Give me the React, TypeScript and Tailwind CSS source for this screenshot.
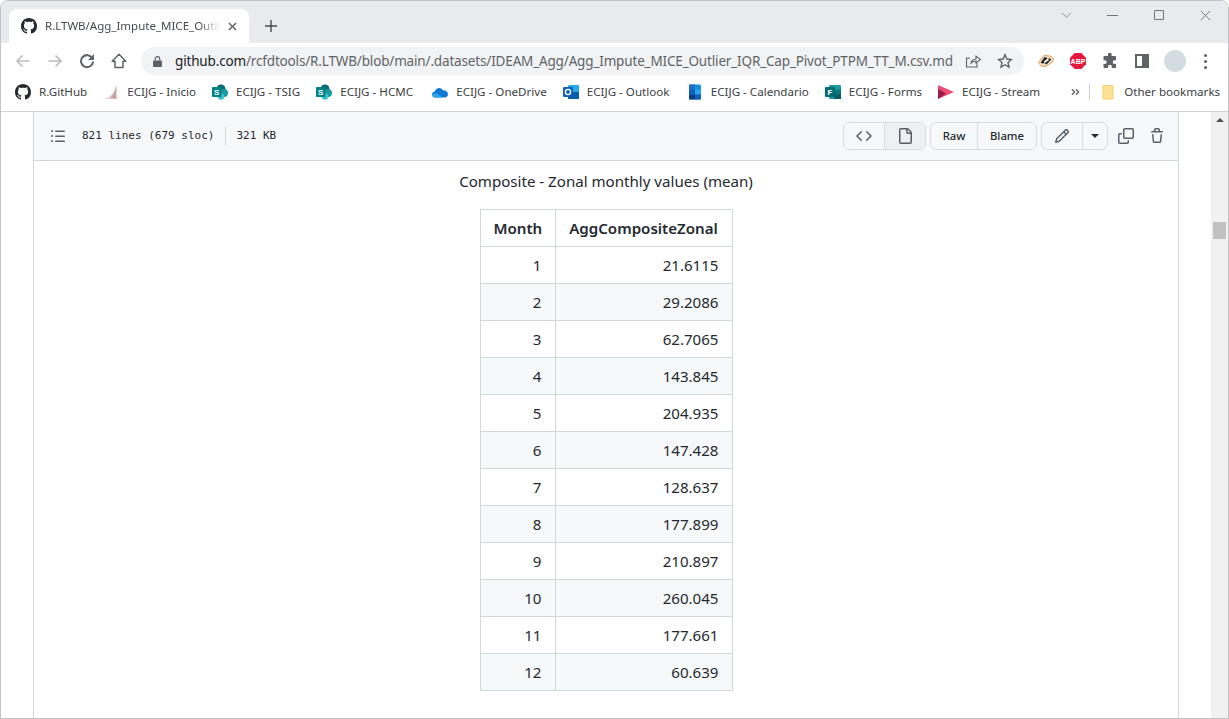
import React from 'react';

const GH_MARK =
  'M8 0c4.42 0 8 3.58 8 8a8.013 8.013 0 0 1-5.45 7.59c-.4.08-.55-.17-.55-.38 0-.27.01-1.13.01-2.2 0-.75-.25-1.23-.54-1.48 1.78-.2 3.65-.88 3.65-3.95 0-.88-.31-1.59-.82-2.15.08-.2.36-1.02-.08-2.12 0 0-.67-.22-2.2.82-.64-.18-1.32-.27-2-.27-.68 0-1.36.09-2 .27-1.53-1.03-2.2-.82-2.2-.82-.44 1.1-.16 1.92-.08 2.12-.51.56-.82 1.28-.82 2.15 0 3.06 1.86 3.75 3.64 3.95-.23.2-.44.55-.51 1.07-.46.21-1.61.55-2.33-.66-.15-.24-.6-.83-1.23-.82-.67.01-.27.38.01.53.34.19.73.9.82 1.13.16.45.68 1.31 2.69.94 0 .67.01 1.3.01 1.49 0 .21-.15.45-.55.38A7.995 7.995 0 0 1 0 8c0-4.42 3.58-8 8-8Z';

const GithubMark = () => (
  <svg viewBox="0 0 16 16" className="w-4 h-4 shrink-0" fill="#24292f">
    <path d={GH_MARK} />
  </svg>
);

const SharePointIcon = () => (
  <svg viewBox="0 0 16 16" className="w-4 h-4 shrink-0">
    <circle cx="9" cy="5" r="4.5" fill="#036c70" />
    <circle cx="12" cy="9" r="4" fill="#1a9ba1" />
    <circle cx="9" cy="12.5" r="3.2" fill="#37c6d0" />
    <rect x="0" y="3" width="9.5" height="10" rx="1" fill="#038387" />
    <text x="4.7" y="11" fontSize="8" fontWeight="700" fill="#fff" textAnchor="middle" fontFamily="Liberation Sans">S</text>
  </svg>
);

const InicioIcon = () => (
  <svg viewBox="0 0 16 16" className="w-4 h-4 shrink-0">
    <path d="M13 1C12.5 7 9 12 1 15H13.5C13 10 14 5 13 1Z" fill="#e7d6d6" />
    <path d="M13 1C12.5 6 11 10 7 14L13.5 15C13 10 14 5 13 1Z" fill="#c9a5a5" />
  </svg>
);

const OneDriveIcon = () => (
  <svg viewBox="0 0 16 16" className="w-4 h-4 shrink-0">
    <path d="M3.5 13.5C1.5 13.5 0 12 0 10.4 0 8.8 1.2 7.6 2.8 7.4 3.6 5.4 5.3 4 7.2 4c1.7 0 3.1.9 3.9 2.4 2.6-.3 4.9 1.6 4.9 3.9 0 1.8-1.4 3.2-3.2 3.2Z" fill="#0f78d4" />
    <path d="M3.5 13.5C1.5 13.5 0 12 0 10.4 2 9 4 8.6 6.2 10l4 3.5Z" fill="#28a8ea" />
  </svg>
);

const OutlookIcon = () => (
  <svg viewBox="0 0 16 16" className="w-4 h-4 shrink-0">
    <rect x="5" y="1" width="11" height="14" rx="1" fill="#28a8ea" />
    <rect x="5" y="8" width="11" height="7" fill="#0a5ea8" />
    <rect x="0" y="3" width="10" height="10" rx="1" fill="#0f5fb5" />
    <circle cx="5" cy="8" r="2.6" fill="none" stroke="#fff" strokeWidth="1.4" />
  </svg>
);

const CalendarIcon = () => (
  <svg viewBox="0 0 16 16" className="w-4 h-4 shrink-0">
    <rect x="2" y="0.5" width="12" height="15" rx="1.5" fill="#1490df" />
    <rect x="2" y="0.5" width="6" height="5" fill="#1f6fc6" />
    <rect x="8" y="5.5" width="6" height="5" fill="#28a8ea" />
    <rect x="2" y="5.5" width="6" height="5" fill="#0f5fb5" />
    <rect x="2" y="10.5" width="6" height="5" fill="#0a3f86" />
    <rect x="8" y="10.5" width="6" height="5" fill="#0f5fb5" />
  </svg>
);

const FormsIcon = () => (
  <svg viewBox="0 0 16 16" className="w-4 h-4 shrink-0">
    <rect x="4" y="1" width="12" height="14" rx="1" fill="#1a9ba1" />
    <rect x="9" y="5.5" width="7" height="4.5" fill="#037c80" />
    <rect x="9" y="10" width="7" height="5" fill="#045c60" />
    <rect x="0" y="3" width="10" height="10" rx="1" fill="#036c70" />
    <text x="5" y="11" fontSize="8" fontWeight="700" fill="#fff" textAnchor="middle" fontFamily="Liberation Sans">F</text>
  </svg>
);

const StreamIcon = () => (
  <svg viewBox="0 0 16 16" className="w-4 h-4 shrink-0">
    <path d="M0 1L16 8 0 15Z" fill="#ea4c76" />
    <path d="M0 5L8 9.5 0 15Z" fill="#9b1b48" />
  </svg>
);

const bookmarks: { icon: React.ReactNode; label: string; width?: string }[] = [
  { icon: <GithubMark />, label: 'R.GitHub' },
  { icon: <InicioIcon />, label: 'ECIJG - Inicio' },
  { icon: <SharePointIcon />, label: 'ECIJG - TSIG' },
  { icon: <SharePointIcon />, label: 'ECIJG - HCMC', width: 'w-[76px]' },
  { icon: <OneDriveIcon />, label: 'ECIJG - OneDrive' },
  { icon: <OutlookIcon />, label: 'ECIJG - Outlook', width: 'w-[84px]' },
  { icon: <CalendarIcon />, label: 'ECIJG - Calendario' },
  { icon: <FormsIcon />, label: 'ECIJG - Forms' },
  { icon: <StreamIcon />, label: 'ECIJG - Stream' },
];

const rows: [number, string][] = [
  [1, '21.6115'],
  [2, '29.2086'],
  [3, '62.7065'],
  [4, '143.845'],
  [5, '204.935'],
  [6, '147.428'],
  [7, '128.637'],
  [8, '177.899'],
  [9, '210.897'],
  [10, '260.045'],
  [11, '177.661'],
  [12, '60.639'],
];

const TabStrip = () => (
  <div className="h-[42px] bg-[#e8eaed] flex items-end pl-[8px] shrink-0">
    <div className="w-[240px] h-[34px] bg-white rounded-t-lg flex items-center pl-[12px] pr-[12px] gap-[8px]">
      <GithubMark />
      <span className="text-[11.5px] text-[#45494e] whitespace-nowrap overflow-hidden flex-1 [mask-image:linear-gradient(to_right,black_88%,transparent)]">
        R.LTWB/Agg_Impute_MICE_Outlier_IQR
      </span>
      <svg viewBox="0 0 10 10" className="w-[9px] h-[9px] shrink-0" stroke="#5f6368" strokeWidth="1.6">
        <path d="M1 1l8 8M9 1l-8 8" />
      </svg>
    </div>
    <div className="h-[34px] flex items-center ml-[16px]">
      <svg viewBox="0 0 12 12" className="w-3 h-3" stroke="#45494e" strokeWidth="1.4">
        <path d="M6 0v12M0 6h12" />
      </svg>
    </div>
    <div className="flex-1 self-start h-[28px] flex items-center justify-end pr-[17px] gap-[35.5px]">
      <svg viewBox="0 0 12 8" className="w-[11px] h-[7px]" fill="none" stroke="#80868b" strokeWidth="1">
        <path d="M1 1l5 5 5-5" />
      </svg>
      <div className="w-[11px] h-px bg-[#70757a]" />
      <div className="w-[10px] h-[10px] border border-[#70757a] rounded-[1px] mr-px" />
      <svg viewBox="0 0 12 12" className="w-[11px] h-[11px]" stroke="#70757a" strokeWidth="1">
        <path d="M1 1l10 10M11 1L1 11" />
      </svg>
    </div>
  </div>
);

const Toolbar = () => (
  <div className="h-[36px] bg-white flex items-center shrink-0 pl-[14px] pr-[16px]">
    <svg viewBox="0 0 16 16" className="w-4 h-4 mr-[16px]" fill="none" stroke="#babcbe" strokeWidth="1.6">
      <path d="M14.5 8H2M7.5 2.5L2 8l5.5 5.5" />
    </svg>
    <svg viewBox="0 0 16 16" className="w-4 h-4 mr-[16px]" fill="none" stroke="#babcbe" strokeWidth="1.6">
      <path d="M1.5 8H14M8.5 2.5L14 8l-5.5 5.5" />
    </svg>
    <svg viewBox="0 0 16 16" className="w-4 h-4 mr-[16px]" fill="none" stroke="#5f6368" strokeWidth="2">
      <path d="M13.4 5.5A6 6 0 1 0 14 8.5" />
      <path d="M15 1v6H9Z" fill="#5f6368" stroke="none" />
    </svg>
    <svg viewBox="0 0 16 16" className="w-4 h-4 mr-[14px]" fill="none" stroke="#5f6368" strokeWidth="1.5">
      <path d="M8 1.2L1.2 8.2H4v6.300h8V8.200h2.800Z" strokeLinejoin="round" />
    </svg>
    <div className="w-[883px] h-[28px] rounded-full bg-[#f1f3f4] flex items-center pl-[12px] pr-[11px]">
      <svg viewBox="0 0 10 12" className="w-[9px] h-[11px] mr-[13px] shrink-0" fill="#5f6368">
        <path d="M1 5h8a1 1 0 0 1 1 1v5a1 1 0 0 1-1 1H1a1 1 0 0 1-1-1V6a1 1 0 0 1 1-1Z" />
        <path d="M2.5 5V3a2.5 2.5 0 0 1 5 0v2" fill="none" stroke="#5f6368" strokeWidth="1.3" />
      </svg>
      <span className="text-[13.5px] whitespace-nowrap flex-1 text-[#5f6368] tracking-[-0.16px]">
        <span className="text-[#202124]">github.com</span>/rcfdtools/R.LTWB/blob/main/.datasets/IDEAM_Agg/Agg_Impute_MICE_Outlier_IQR_Cap_Pivot_PTPM_TT_M.csv.md
      </span>
      <svg viewBox="0 0 16 16" className="w-4 h-4 ml-[12px] shrink-0" fill="none" stroke="#5f6368" strokeWidth="1.1">
        <path d="M12 10v4H1.5V5H5M6 10c.5-2.5 2-3.800 5-4V3l4.500 3.500L11 10V8C9 8 7.500 8.500 6 10Z" />
      </svg>
      <svg viewBox="0 0 16 16" className="w-4 h-4 ml-[16px] shrink-0" fill="none" stroke="#5f6368" strokeWidth="1.4">
        <path d="M8 1.800l1.900 4.200 4.500.5-3.400 3 1 4.500L8 11.700 4 14l1-4.500-3.400-3 4.500-.5Z" />
      </svg>
    </div>
    <div className="flex items-center ml-[14px] gap-[16px]">
      <svg viewBox="0 0 16 16" className="w-4 h-4 shrink-0">
        <path d="M0.500 9.500L6 2.500l6 .5 3.500 2.500-1 3.500-6 4-5 .5Z" fill="#f8e3cc" stroke="#e8994a" strokeWidth="1" />
        <path d="M2.500 10L6.500 4l3 1-4 5.500Z" fill="#222" />
        <path d="M6.500 10.500L11 5l2.500 1.500-5 5Z" fill="#333" />
        <path d="M6 8l4-2 1 1-4 2.500Z" fill="#fff" />
      </svg>
      <svg viewBox="0 0 16 16" className="w-4 h-4 shrink-0">
        <path d="M4.700 0h6.600L16 4.700v6.600L11.300 16H4.700L0 11.300V4.700Z" fill="#e8173c" />
        <text x="8" y="10.500" fontSize="7" fontWeight="700" fill="#fff" textAnchor="middle" fontFamily="Liberation Sans">ABP</text>
      </svg>
      <svg viewBox="0 0 16 16" className="w-4 h-4 shrink-0" fill="#5f6368">
        <path d="M6 1.500a1.800 1.800 0 0 1 3.600 0V3H13a1 1 0 0 1 1 1v3.200h-1.400a1.900 1.900 0 0 0 0 3.800H14V14a1 1 0 0 1-1 1H9.800v-1.300a1.900 1.900 0 0 0-3.800 0V15H2.500a1 1 0 0 1-1-1v-3h1.300a1.900 1.900 0 0 0 0-3.800H1.500V4a1 1 0 0 1 1-1H6Z" />
      </svg>
      <div className="w-[14px] h-[14px] border-[2px] border-[#5f6368] flex justify-end ml-px">
        <div className="w-[5px] h-full bg-[#5f6368]" />
      </div>
      <div className="w-[22px] h-[22px] rounded-full bg-[#d3dde1] -ml-[1px]" />
      <div className="flex flex-col gap-[3px] ml-[2px]">
        <div className="w-[3px] h-[3px] rounded-full bg-[#5f6368]" />
        <div className="w-[3px] h-[3px] rounded-full bg-[#5f6368]" />
        <div className="w-[3px] h-[3px] rounded-full bg-[#5f6368]" />
      </div>
    </div>
  </div>
);

const BookmarksBar = () => (
  <div className="h-[33px] bg-white border-b border-[#d0d2d5] flex items-center pl-[14px] pb-[6px] shrink-0 text-[11.6px] text-[#3c4043]">
    <div className="flex items-center gap-[16px]">
      {bookmarks.map((b) => (
        <div key={b.label} className="flex items-center gap-[8px] whitespace-nowrap">
          {b.icon}
          <span className={b.width}>{b.label}</span>
        </div>
      ))}
    </div>
    <svg viewBox="0 0 10 8" className="w-[9px] h-[8px] ml-[31px] shrink-0" fill="none" stroke="#5f6368" strokeWidth="1.5">
      <path d="M1 1l3 3-3 3M5.500 1l3 3-3 3" />
    </svg>
    <div className="w-px h-4 bg-[#d0d2d5] ml-[9px]" />
    <svg viewBox="0 0 12 15" className="w-[12px] h-[15px] ml-[12px] shrink-0">
      <path d="M1 .5h10v13.500H1Z" fill="#fde293" stroke="#f0cf72" />
    </svg>
    <span className="ml-[10px] whitespace-nowrap">Other bookmarks</span>
  </div>
);

const FileHeader = () => (
  <div className="h-[49px] bg-[#f6f8fa] border-b border-[#d0d7de] flex items-center pl-[16px] pr-[13px] shrink-0">
    <svg viewBox="0 0 16 16" className="w-4 h-4 mr-[16px]" fill="#57606a">
      <path d="M5.75 2.5h8.5a.75.75 0 0 1 0 1.5h-8.5a.75.75 0 0 1 0-1.5Zm0 5h8.5a.75.75 0 0 1 0 1.5h-8.5a.75.75 0 0 1 0-1.5Zm0 5h8.5a.75.75 0 0 1 0 1.5h-8.5a.75.75 0 0 1 0-1.5ZM2 14a1 1 0 1 1 0-2 1 1 0 0 1 0 2Zm1-6a1 1 0 1 1-2 0 1 1 0 0 1 2 0ZM2 4a1 1 0 1 1 0-2 1 1 0 0 1 0 2Z" />
    </svg>
    <span className="text-[11px] text-[#24292f] [font-family:'DejaVu_Sans_Mono',monospace] whitespace-nowrap">821 lines (679 sloc)</span>
    <div className="w-px h-[18px] bg-[#d0d7de] ml-[11px] mr-[10px]" />
    <span className="text-[11px] text-[#24292f] [font-family:'DejaVu_Sans_Mono',monospace] whitespace-nowrap">321 KB</span>
    <div className="flex-1" />
    <div className="flex h-[28px] border border-[#d8dce1] rounded-md overflow-hidden">
      <div className="w-[41px] flex items-center justify-center border-r border-[#d8dce1]">
        <svg viewBox="0 0 16 16" className="w-4 h-4" fill="#57606a">
          <path d="m11.28 3.22 4.25 4.25a.75.75 0 0 1 0 1.06l-4.25 4.25a.749.749 0 0 1-1.275-.326.749.749 0 0 1 .215-.734L13.94 8l-3.72-3.72a.749.749 0 0 1 .326-1.275.749.749 0 0 1 .734.215Zm-6.56 0a.751.751 0 0 1 1.042.018.751.751 0 0 1 .018 1.042L2.06 8l3.72 3.720a.749.749 0 0 1-.326 1.275.749.749 0 0 1-.734-.215L.47 8.53a.75.75 0 0 1 0-1.06Z" />
        </svg>
      </div>
      <div className="w-[40px] flex items-center justify-center bg-[#eef0f3]">
        <svg viewBox="0 0 16 16" className="w-4 h-4" fill="#57606a">
          <path d="M2 1.75C2 .784 2.784 0 3.75 0h6.586c.464 0 .909.184 1.237.513l2.914 2.914c.329.328.513.773.513 1.237v9.586A1.75 1.75 0 0 1 13.25 16h-9.5A1.75 1.75 0 0 1 2 14.25Zm1.75-.25a.25.25 0 0 0-.25.25v12.5c0 .138.112.25.25.25h9.5a.25.25 0 0 0 .25-.25V6h-2.75A1.75 1.75 0 0 1 9 4.25V1.5Zm6.75.062V4.25c0 .138.112.25.25.25h2.688l-.011-.013-2.914-2.914-.013-.011Z" />
        </svg>
      </div>
    </div>
    <div className="flex h-[28px] ml-[4px] border border-[#d8dce1] rounded-md text-[11.3px] font-medium text-[#24292f] items-center">
      <div className="w-[47px] h-full pt-px flex items-center justify-center border-r border-[#d8dce1]">Raw</div>
      <div className="w-[58px] h-full pt-px flex items-center justify-center">Blame</div>
    </div>
    <div className="flex h-[28px] ml-[4px] border border-[#d8dce1] rounded-md">
      <div className="w-[41px] flex items-center justify-center border-r border-[#d8dce1]">
        <svg viewBox="0 0 16 16" className="w-4 h-4" fill="#57606a">
          <path d="M11.013 1.427a1.75 1.75 0 0 1 2.474 0l1.086 1.086a1.75 1.75 0 0 1 0 2.474l-8.61 8.61c-.21.21-.47.364-.756.445l-3.251.93a.75.75 0 0 1-.927-.928l.929-3.25c.081-.286.235-.547.445-.758l8.61-8.61Zm.176 4.823L9.75 4.81l-6.286 6.287a.253.253 0 0 0-.064.108l-.558 1.953 1.953-.558a.253.253 0 0 0 .108-.064Zm1.238-3.763a.25.25 0 0 0-.354 0L10.811 3.75l1.439 1.44 1.263-1.263a.25.25 0 0 0 0-.354Z" />
        </svg>
      </div>
      <div className="w-[24px] flex items-center justify-center">
        <div className="w-0 h-0 border-x-[4px] border-x-transparent border-t-[4px] border-t-[#24292f]" />
      </div>
    </div>
    <svg viewBox="0 0 16 16" className="w-4 h-4 ml-[10px]" fill="#57606a">
      <path d="M0 6.75C0 5.784.784 5 1.75 5h1.5a.75.75 0 0 1 0 1.5h-1.5a.25.25 0 0 0-.25.25v7.5c0 .138.112.25.25.25h7.5a.25.25 0 0 0 .25-.25v-1.5a.75.75 0 0 1 1.5 0v1.5A1.75 1.75 0 0 1 9.25 16h-7.5A1.75 1.75 0 0 1 0 14.25Z" />
      <path d="M5 1.75C5 .784 5.784 0 6.75 0h7.5C15.216 0 16 .784 16 1.75v7.5A1.75 1.75 0 0 1 14.25 11h-7.5A1.75 1.75 0 0 1 5 9.25Zm1.75-.25a.25.25 0 0 0-.25.25v7.5c0 .138.112.25.25.25h7.5a.25.25 0 0 0 .25-.25v-7.5a.25.25 0 0 0-.25-.25Z" />
    </svg>
    <svg viewBox="0 0 16 16" className="w-4 h-4 ml-[15px]" fill="#57606a">
      <path d="M11 1.75V3h2.25a.75.75 0 0 1 0 1.5H2.75a.75.75 0 0 1 0-1.5H5V1.75C5 .784 5.784 0 6.75 0h2.5C10.216 0 11 .784 11 1.75ZM4.496 6.675l.66 6.6a.25.25 0 0 0 .249.225h5.19a.25.25 0 0 0 .249-.225l.66-6.6a.75.75 0 0 1 1.492.149l-.66 6.6A1.748 1.748 0 0 1 10.595 15h-5.19a1.75 1.75 0 0 1-1.741-1.575l-.66-6.6a.75.75 0 1 1 1.492-.15ZM6.5 1.75V3h3V1.75a.25.25 0 0 0-.25-.25h-2.5a.25.25 0 0 0-.25.25Z" />
    </svg>
  </div>
);

const MonthlyTable = () => (
  <table className="table-fixed w-[252px] border-collapse mx-auto mt-[16px] text-[15.1px] text-[#24292f]">
    <thead>
      <tr className="h-[37px]">
        <th className="border border-[#d0d7de] px-[13px] font-semibold text-center w-[75px]">Month</th>
        <th className="border border-[#d0d7de] px-[13px] font-semibold text-center w-[177px]">AggCompositeZonal</th>
      </tr>
    </thead>
    <tbody>
      {rows.map(([m, v], i) => (
        <tr key={m} className={`h-[37px] ${i % 2 === 0 ? 'bg-white' : 'bg-[#f6f8fa]'}`}>
          <td className="border border-[#d0d7de] px-[13px] text-right">{m}</td>
          <td className="border border-[#d0d7de] px-[13px] text-right">{v}</td>
        </tr>
      ))}
    </tbody>
  </table>
);

const Scrollbar = () => (
  <div className="w-[17px] bg-[#f1f1f1] flex flex-col items-center shrink-0">
    <div className="w-0 h-0 mt-[6px] border-x-[4px] border-x-transparent border-b-[4px] border-b-[#505050]" />
    <div className="w-[13px] h-[17px] bg-[#c1c1c1] mt-[100px]" />
  </div>
);

export default function App() {
  return (
    <div className="w-[1229px] h-[719px] overflow-hidden bg-white border border-[#c2c3c4] rounded-t-lg flex flex-col [font-family:'Noto_Sans',sans-serif]">
      <TabStrip />
      <Toolbar />
      <BookmarksBar />
      <div className="flex-1 flex min-h-0">
        <div className="flex-1 min-w-0 pl-[32px] pr-[32px]">
          <div className="h-full border-x border-[#d0d7de] flex flex-col">
            <FileHeader />
            <p className="text-center text-[15.1px] text-[#24292f] mt-[8px] leading-[24px]">Composite - Zonal monthly values (mean)</p>
            <MonthlyTable />
          </div>
        </div>
        <Scrollbar />
      </div>
    </div>
  );
}
